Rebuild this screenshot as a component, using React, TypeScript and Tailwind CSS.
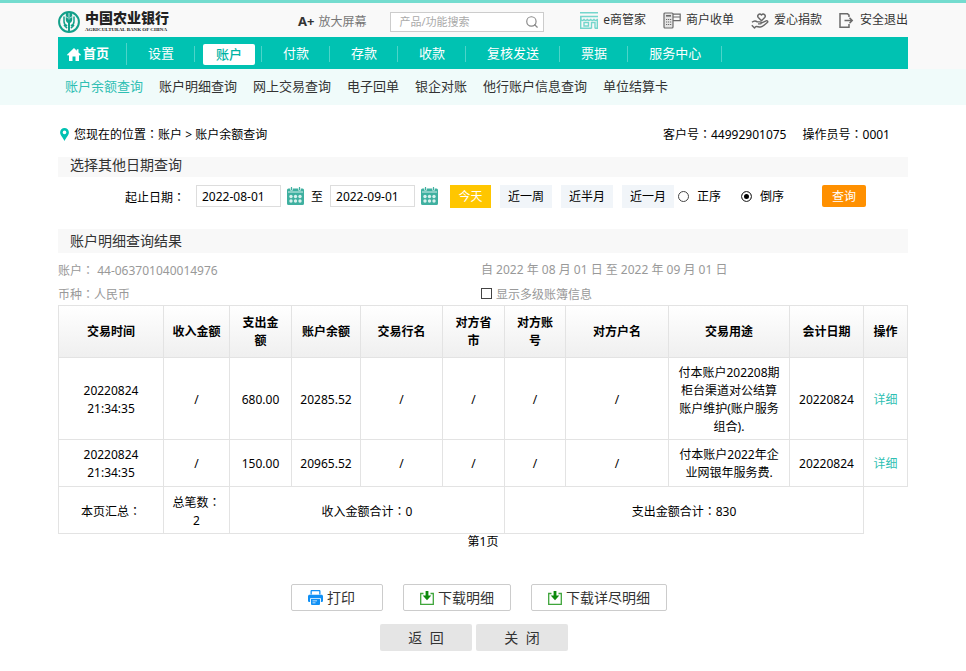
import type { ReactNode } from "react"
import { Search } from "lucide-react"

const topLinks = [
  { label: "e商管家", icon: ShopIcon },
  { label: "商户收单", icon: PosIcon },
  { label: "爱心捐款", icon: HeartHandIcon },
  { label: "安全退出", icon: ExitIcon },
]

const navItems = ["设置", "账户", "付款", "存款", "收款", "复核发送", "票据", "服务中心"]

const subItems = ["账户余额查询", "账户明细查询", "网上交易查询", "电子回单", "银企对账", "他行账户信息查询", "单位结算卡"]

const columns = [
  { label: "交易时间", width: "w-[105px]" },
  { label: "收入金额", width: "w-[66px]" },
  { label: "支出金额", width: "w-[62px]" },
  { label: "账户余额", width: "w-[69px]" },
  { label: "交易行名", width: "w-[82px]" },
  { label: "对方省市", width: "w-[62px]" },
  { label: "对方账号", width: "w-[61px]" },
  { label: "对方户名", width: "w-[103px]" },
  { label: "交易用途", width: "w-[121px]" },
  { label: "会计日期", width: "w-[74px]" },
  { label: "操作", width: "w-[44px]" },
]

const records = [
  {
    time: "20220824 21:34:35",
    out: "680.00",
    balance: "20285.52",
    usage: "付本账户202208期柜台渠道对公结算账户维护(账户服务组合).",
    date: "20220824",
    height: "h-[82px]",
  },
  {
    time: "20220824 21:34:35",
    out: "150.00",
    balance: "20965.52",
    usage: "付本账户2022年企业网银年服务费.",
    date: "20220824",
    height: "h-[47px]",
  },
]

function Emblem() {
  return (
    <svg viewBox="0 0 22 22" className="w-[22px] h-[22px] shrink-0" fill="none">
      <circle cx="11" cy="11" r="9.9" stroke="#12a08a" strokeWidth="2" />
      <path d="M7.800 1.500v7c0 2 1 2.900 2.200 3.500V21h2v-9c1.200-.6 2.200-1.500 2.200-3.500v-7z" fill="#12a08a" />
      <path d="M11 2v6.500M7.800 5.600 10 7M14.200 5.600 12 7" stroke="#fff" strokeWidth=".7" />
      <path d="M6 5.500v5c0 2.600 1.300 3.600 3.200 4.300M16 5.500v5c0 2.600-1.300 3.600-3.200 4.300M6 13.800c.8 1.700 1.700 2.600 3.200 3.200M16 13.800c-.8 1.700-1.700 2.600-3.200 3.200" stroke="#12a08a" strokeWidth="1.500" />
    </svg>
  )
}

function ShopIcon() {
  return (
    <svg viewBox="0 0 18 17" className="w-[18px] h-[17px]" fill="none" stroke="#74d6cc" strokeWidth="1.400">
      <path d="M0 .8h18M0 4.500h18M.7 4.500V16" />
      <path d="M.7 5v1.800a1.660 1.660 0 0 0 3.320 0 1.660 1.660 0 0 0 3.320 0 1.660 1.660 0 0 0 3.320 0 1.660 1.660 0 0 0 3.320 0 1.660 1.660 0 0 0 3.320 0V16" />
      <path d="M0 16.300h11.500M15 16.300h3" />
      <path d="M4 10.500h4.500v3.500H4zM11.500 16.500v-6H15v6" />
    </svg>
  )
}

function PosIcon() {
  return (
    <svg viewBox="0 0 18 17" className="w-[18px] h-[17px]" fill="none" stroke="#6b6b6b" strokeWidth="1.200">
      <rect x="1" y="1" width="9" height="15" rx="1" fill="#e4e4e4" />
      <path d="M3 3.800h5" strokeWidth="1.600" />
      <path d="M3 7.500h5.200M3 10h5.200M3 12.500h5.200" strokeDasharray="1.200 .8" />
      <path d="M10 2.200h7.200v6.500H10M10 5h7.200" />
    </svg>
  )
}

function HeartHandIcon() {
  return (
    <svg viewBox="0 0 18 17" className="w-[18px] h-[17px]" fill="none" stroke="#666" strokeWidth="1.400" strokeLinejoin="round">
      <path d="M10.500 8.800 7.300 5.500C5.600 3.500 8.400.7 10.500 2.900c2.100-2.200 4.900.6 3.200 2.600z" />
      <path d="M1 10.300c2-1.800 3.800-1.600 5.300-.4h3c1.300.2 1.200 1.900-.1 2H7M9.800 11.300l5.300-2.500c1.400-.5 2.200.9 1.200 1.800-2.500 2.300-4.800 4.300-6.800 4.400-2 .1-3.500-.8-4.800-.4L3.500 16 .8 13.200" />
    </svg>
  )
}

function ExitIcon() {
  return (
    <svg viewBox="0 0 16 15" className="w-4 h-[15px]" fill="none" stroke="#6b6b6b" strokeWidth="1.500">
      <path d="M10 4V2.200L8.500.8H1v13.400h9V11" />
      <path d="M5.500 7.500h7.500M10.500 4.800l2.700 2.700-2.700 2.700" />
    </svg>
  )
}

function HomeIcon() {
  return (
    <svg viewBox="0 0 14 13" className="w-[14px] h-[13px]" fill="#fff">
      <path d="M7 0 0 6.800l1 .9 1-.8V13h3.500V8.500h3V13H12V6.900l1 .8 1-.9-2.500-2.400V1.200H9.800v1.500z" />
    </svg>
  )
}

function PinIcon() {
  return (
    <svg viewBox="0 0 9 13" className="w-[9px] h-[13px]">
      <path d="M4.500 0A4.400 4.400 0 0 0 .1 4.500C.1 7.400 3 9.600 4.500 13 6 9.600 8.900 7.400 8.900 4.500A4.400 4.400 0 0 0 4.500 0z" fill="#00c2b2" />
      <circle cx="4.500" cy="4.400" r="1.800" fill="#fff" />
    </svg>
  )
}

function CalendarIcon() {
  return (
    <svg viewBox="0 0 17 18" className="w-[17px] h-[18px]">
      <path d="M1.500 1.500h14A1.500 1.500 0 0 1 17 3v13.500a1.500 1.500 0 0 1-1.500 1.500h-14A1.500 1.500 0 0 1 0 16.500V3a1.500 1.500 0 0 1 1.500-1.500z" fill="#3fb0a0" />
      <path d="M1 5h15" stroke="#d5efeb" strokeWidth="1" />
      <path d="M4.500 0v3.500M12.500 0v3.500" stroke="#fff" strokeWidth="2.400" />
      <path d="M4.500 0v3M12.500 0v3" stroke="#3fb0a0" strokeWidth="1.200" />
      <g fill="#d9f1ed">
        <circle cx="4" cy="9.500" r="1.700" />
        <circle cx="8.500" cy="9.500" r="1.700" />
        <circle cx="13" cy="9.500" r="1.700" />
        <circle cx="4" cy="14" r="1.700" />
        <circle cx="8.500" cy="14" r="1.700" />
        <circle cx="13" cy="14" r="1.700" />
      </g>
    </svg>
  )
}

function PrinterIcon() {
  return (
    <svg viewBox="0 0 15 15" className="w-[15px] h-[15px]" fill="#1090f5">
      <path d="M2.500 4.500V1.300C2.500.5 3 0 3.800 0h7.400c.8 0 1.300.5 1.300 1.300v3.200h-1.300V1.300H3.800v3.200z" />
      <path d="M1.500 4.800h12c.8 0 1.500.7 1.500 1.500v4.400c0 .8-.7 1.300-1.500 1.300h-.6V8.300H2.100V12h-.6C.7 12 0 11.500 0 10.700V6.300c0-.8.7-1.500 1.500-1.500z" />
      <path d="M3 9h9v4.700c0 .8-.5 1.300-1.300 1.300H4.300C3.500 15 3 14.500 3 13.700zm1.500 1.500v.8H9v-.8zm0 2v.8h3v-.8z" />
    </svg>
  )
}

function DownloadIcon() {
  return (
    <svg viewBox="0 0 14 14" className="w-[14px] h-[14px]" fill="none">
      <path d="M3.500 2.500H.7v10.800h12.600V2.500h-2.800" stroke="#3ea53a" strokeWidth="1.300" />
      <path d="M5.600 0h2.800v4.500h2.900L7 9.300 2.700 4.500h2.900z" fill="#0d8a0d" />
    </svg>
  )
}

// 居中的全角冒号
const Colon = () => <span className="font-['Noto_Sans_CJK_TC',sans-serif]">：</span>

const SectionTitle = ({ className, children }: { className: string; children: ReactNode }) => (
  <h2 className={`pl-3 bg-[#f8f8f8] text-sm text-[#333] ${className}`}>{children}</h2>
)

const OutlineButton = ({ className, children }: { className: string; children: ReactNode }) => (
  <button className={`flex items-center gap-1 h-[27px] px-4 bg-white border border-[#ccc] rounded-xs text-sm text-[#333] ${className}`}>
    {children}
  </button>
)

const DateField = ({ label, value }: { label: string; value: string }) => (
  <div className="flex items-center gap-[6px] h-[22px]">
    <input aria-label={label} defaultValue={value} className="w-[85px] h-[22px] px-[5px] bg-white border border-[#ddd]" />
    <button type="button" aria-label={`选择${label}`}>
      <CalendarIcon />
    </button>
  </div>
)

const Header = () => (
  <header>
    <div className="bg-[#f9f9f9] border-t-[3px] border-[#74dccf]">
      <div className="max-w-[850px] mx-auto">

        <div className="flex items-center h-[34px] text-[#333]">
          <a href="#" className="flex items-center gap-[5px] pt-1">
            <Emblem />
            <span className="flex flex-col">
              <span className="text-sm leading-4 font-black text-[#222]">中国农业银行</span>
              <span className="font-['Liberation_Serif',serif] text-[5px] leading-[8px] font-bold whitespace-nowrap text-[#222]">
                AGRICULTURAL BANK OF CHINA
              </span>
            </span>
          </a>

          <button className="flex items-center gap-1 ml-[129px] pt-1 text-[#777]">
            <b className="text-[13px] text-[#333]">A+</b>
            放大屏幕
          </button>

          <div className="flex items-center justify-between w-[154px] h-5 ml-6 mt-1 pl-2 pr-1 bg-white border border-[#ccc]">
            <input
              aria-label="搜索"
              placeholder="产品/功能搜索"
              className="w-[110px] text-[11px] outline-none placeholder:text-[#aaa]"
            />
            <button aria-label="搜索">
              <Search size={14} strokeWidth={2} color="#888" />
            </button>
          </div>

          <div className="flex items-center gap-[17px] ml-auto">
            {topLinks.map((item) => (
              <a key={item.label} href="#" className="flex items-center gap-[5px]">
                <item.icon />
                {item.label}
              </a>
            ))}
          </div>
        </div>

        <nav className="flex items-center h-8 pt-[2px] bg-[#00c2b2] text-[13px] text-white">
          <a href="#" className="flex items-center gap-[2px] h-[22px] pl-[9px] pr-[17px] border-r border-[#4dd4c9] font-bold">
            <HomeIcon />
            首页
          </a>
          {navItems.map((item) =>
            item === "账户" ? (
              <a key={item} href="#" className="flex items-center h-4 pl-2 pr-[6px] border-r border-[#4dd4c9]">
                <span className="px-[13px] leading-[21px] rounded-xs bg-white font-medium text-[#00b3a4]">{item}</span>
              </a>
            ) : (
              <a key={item} href="#" className="flex items-center h-4 pl-[21px] pr-5 border-r border-[#4dd4c9]">
                {item}
              </a>
            )
          )}
        </nav>

      </div>
    </div>

    <div className="bg-[#f0fbfa]">
      <nav className="flex items-center gap-4 max-w-[850px] h-9 mx-auto pl-[7px] text-[13px] text-[#333]">
        {subItems.map((item, i) => (
          <a key={item} href="#" className={i === 0 ? "text-[#2fbfb3]" : ""}>
            {item}
          </a>
        ))}
      </nav>
    </div>
  </header>
)

const radioClass =
  "appearance-none w-[11px] h-[11px] rounded-full border border-[#444] bg-white checked:bg-black checked:shadow-[inset_0_0_0_2px_#fff]"

const QueryForm = () => (
  <form className="flex items-start h-[52px] pl-[67px] pt-2 leading-[23px]" onSubmit={(e) => e.preventDefault()}>
    <span className="w-[71px]">起止日期<Colon /></span>
    <DateField label="开始日期" value="2022-08-01" />
    <span className="mx-[7px]">至</span>
    <DateField label="结束日期" value="2022-09-01" />

    <div className="flex gap-[9px] ml-3">
      <button type="button" className="w-[41px] h-[23px] bg-[#ffc600] text-white">今天</button>
      <button type="button" className="w-[52px] h-[23px] bg-[#f1f5f9]">近一周</button>
      <button type="button" className="w-[52px] h-[23px] bg-[#f1f5f9]">近半月</button>
      <button type="button" className="w-[52px] h-[23px] bg-[#f1f5f9]">近一月</button>
    </div>

    <label className="flex items-center gap-2 ml-1">
      <input type="radio" name="order" className={radioClass} />
      正序
    </label>
    <label className="flex items-center gap-2 ml-5">
      <input type="radio" name="order" defaultChecked className={radioClass} />
      倒序
    </label>

    <button type="submit" className="h-[22px] ml-[38px] px-[10px] rounded-xs bg-[#ff9000] text-white">查询</button>
  </form>
)

const ResultTable = () => (
  <table className="table-fixed border-collapse w-full text-center leading-[18px]">
    <colgroup>
      {columns.map((col) => (
        <col key={col.label} className={col.width} />
      ))}
    </colgroup>
    <thead>
      <tr className="h-[52px] bg-linear-to-b from-white to-[#efefef]">
        {columns.map((col) => (
          <th key={col.label} className="px-2 border border-[#e3e3e3] font-bold">{col.label}</th>
        ))}
      </tr>
    </thead>
    <tbody>
      {records.map((r) => (
        <tr key={r.out} className={r.height}>
          <td className="px-6 pt-[2px] border border-[#e3e3e3]">{r.time}</td>
          <td className="pt-[2px] border border-[#e3e3e3]">/</td>
          <td className="pt-[2px] border border-[#e3e3e3]">{r.out}</td>
          <td className="pt-[2px] border border-[#e3e3e3]">{r.balance}</td>
          <td className="pt-[2px] border border-[#e3e3e3]">/</td>
          <td className="pt-[2px] border border-[#e3e3e3]">/</td>
          <td className="pt-[2px] border border-[#e3e3e3]">/</td>
          <td className="pt-[2px] border border-[#e3e3e3]">/</td>
          <td className="px-2 pt-[2px] border border-[#e3e3e3]">{r.usage}</td>
          <td className="pt-[2px] border border-[#e3e3e3]">{r.date}</td>
          <td className="pt-[2px] border border-[#e3e3e3]">
            <a href="#" className="text-[#2fbfb3]">详细</a>
          </td>
        </tr>
      ))}
      <tr className="h-[47px]">
        <td className="pt-[2px] border border-[#e3e3e3]">本页汇总<Colon /></td>
        <td className="px-2 pt-[2px] border border-[#e3e3e3]">总笔数<Colon />2</td>
        <td colSpan={4} className="pt-[2px] border border-[#e3e3e3]">收入金额合计<Colon />0</td>
        <td colSpan={4} className="pt-[2px] border border-[#e3e3e3]">支出金额合计<Colon />830</td>
      </tr>
    </tbody>
  </table>
)

const App = () => {

  return (

    <div className="min-h-screen bg-white font-['Noto_Sans','Noto_Sans_CJK_SC',sans-serif] text-xs text-black">

      <Header />

      <main className="max-w-[850px] mx-auto pb-5">

        {/* 当前位置 */}
        <div className="flex items-center justify-between h-[52px] pl-[2px] pr-[18px] pt-[6px]">
          <div className="flex items-center gap-[5px]">
            <PinIcon />
            <span>您现在的位置<Colon />账户 &gt; 账户余额查询</span>
          </div>
          <div className="flex gap-4">
            <span>客户号<Colon />44992901075</span>
            <span>操作员号<Colon />0001</span>
          </div>
        </div>

        <SectionTitle className="h-5 leading-4">选择其他日期查询</SectionTitle>
        <QueryForm />
        <SectionTitle className="h-6 leading-6">账户明细查询结果</SectionTitle>

        {/* 账户信息 */}
        <div className="grid grid-cols-2 h-[52px] pt-[5px] pr-1 leading-[23px] text-[#999]">
          <div>账户<Colon /> 44-063701040014976</div>
          <div>自 2022 年 08 月 01 日 至 2022 年 09 月 01 日</div>
          <div>币种<Colon />人民币</div>
          <label className="flex items-center gap-1">
            <input
              type="checkbox"
              className="appearance-none w-[11px] h-[11px] mb-[2px] border border-[#444] bg-white checked:bg-[#444]"
            />
            显示多级账簿信息
          </label>
        </div>

        <ResultTable />
        <p className="text-center leading-4">第1页</p>

        {/* 操作按钮 */}
        <div className="flex justify-center gap-5 mt-[34px] pr-2">
          <OutlineButton className="w-[92px]"><PrinterIcon />打印</OutlineButton>
          <OutlineButton className=""><DownloadIcon />下载明细</OutlineButton>
          <OutlineButton className=""><DownloadIcon />下载详尽明细</OutlineButton>
        </div>
        <div className="flex justify-center gap-1 mt-[13px] pr-[18px]">
          <button className="w-[92px] h-[27px] rounded-xs bg-[#e5e5e5] text-sm text-[#333] whitespace-pre">返  回</button>
          <button className="w-[92px] h-[27px] rounded-xs bg-[#e5e5e5] text-sm text-[#333] whitespace-pre">关  闭</button>
        </div>

      </main>

    </div>

  )

}

export default App
